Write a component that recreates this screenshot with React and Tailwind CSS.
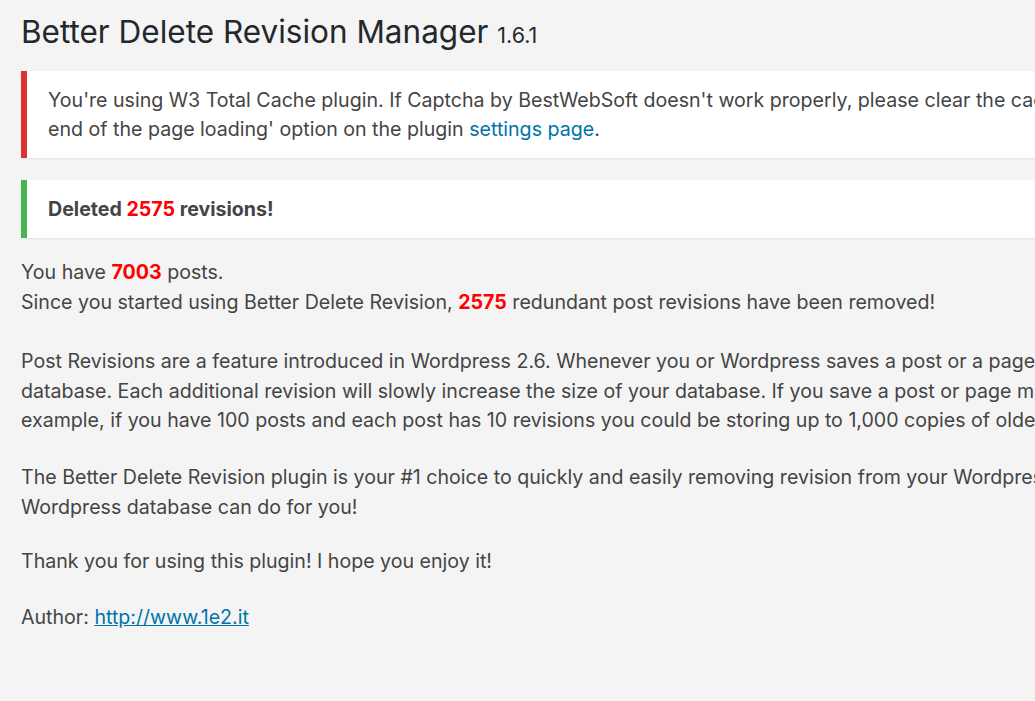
export default function App() {
  const num = "font-bold text-[#ff0000]";

  return (
    <div className="h-screen w-full overflow-hidden bg-[#f4f4f4] font-['Inter',sans-serif] text-[#444]">
      <div className="w-[1600px] pl-[21px] pt-[14px]">
        <h1 className="text-[31.5px] leading-[36px] text-[#23282d] whitespace-nowrap">
          Better Delete Revision Manager{" "}
          <span className="text-[21.5px] leading-none">1.6.1</span>
        </h1>

        <div className="mt-[21px] border-l-[6px] border-[#dc3232] bg-white py-[14.5px] pl-[21px] text-[19.6px] leading-[29px] whitespace-nowrap shadow-[0_1px_2px_rgba(0,0,0,0.08)]">
          You're using W3 Total Cache plugin. If Captcha by BestWebSoft doesn't work properly, please clear the cache and enable 'Load Captcha at the
          <br />
          end of the page loading' option on the plugin{" "}
          <a href="#" className="text-[#0073aa]">settings page</a>.
        </div>

        <div className="mt-[22px] border-l-[6px] border-[#46b450] bg-white py-[14.5px] pl-[21px] text-[19.6px] leading-[29px] font-bold whitespace-nowrap shadow-[0_1px_2px_rgba(0,0,0,0.08)]">
          Deleted <span className={num}>2575</span> revisions!
        </div>

        <div className="mt-[20px] text-[19.6px] leading-[29.5px] whitespace-nowrap">
          <p>
            You have <span className={num}>7003</span> posts.
            <br />
            Since you started using Better Delete Revision, <span className={num}>2575</span> redundant post revisions have been removed!
          </p>
          <p className="mt-[30px]">
            Post Revisions are a feature introduced in Wordpress 2.6. Whenever you or Wordpress saves a post or a page, a revision is automatically created and stored in your Wordpress
            <br />
            database. Each additional revision will slowly increase the size of your database. If you save a post or page multiple times, your number of revisions will greatly increase overtime. For
            <br />
            example, if you have 100 posts and each post has 10 revisions you could be storing up to 1,000 copies of older data!
          </p>
          <p className="mt-[27.5px]">
            The Better Delete Revision plugin is your #1 choice to quickly and easily removing revision from your Wordpress database. Try it out today to see what a lighter, faster
            <br />
            Wordpress database can do for you!
          </p>
          <p className="mt-[25px]">Thank you for using this plugin! I hope you enjoy it!</p>
          <p className="mt-[26.5px]">
            Author:{" "}
            <a href="#" className="text-[#0073aa] underline">http://www.1e2.it</a>
          </p>
        </div>
      </div>
    </div>
  );
}
